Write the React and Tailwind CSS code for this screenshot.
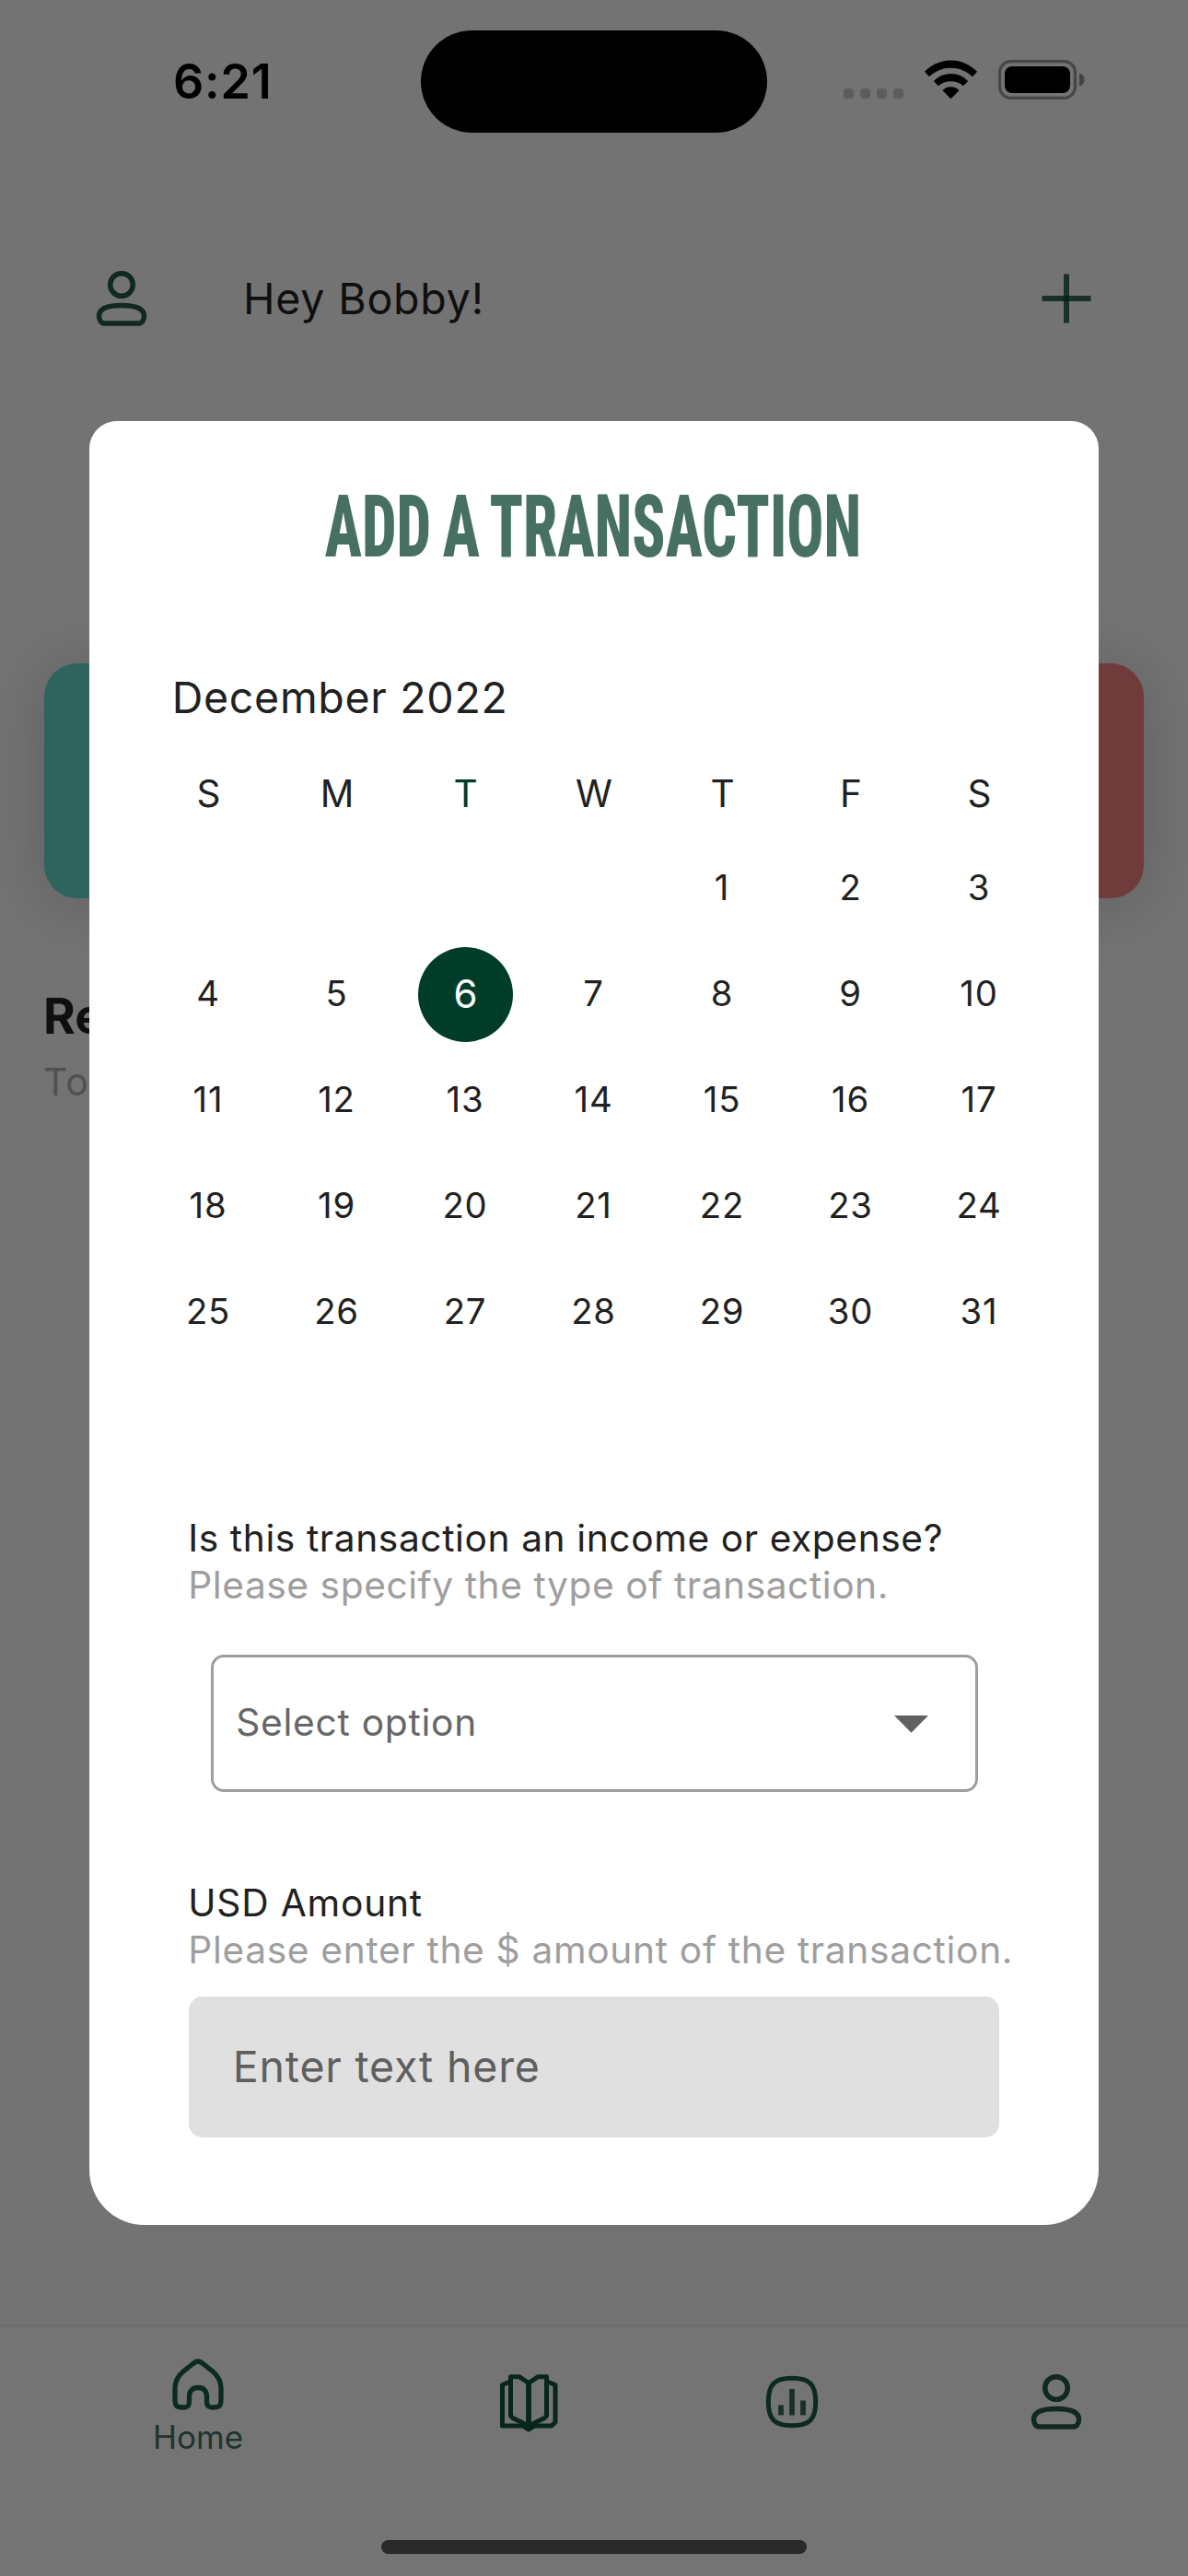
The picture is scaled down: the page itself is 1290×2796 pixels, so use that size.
const weekdays = ["S", "M", "T", "W", "T", "F", "S"];
const firstWeekday = 4;
const selectedDay = 6;
const cells = Array.from({ length: 35 }, (_, i) => (i >= firstWeekday ? i - firstWeekday + 1 : null));

function UserIcon() {
  return (
    <svg width="60" height="66" viewBox="0 0 60 66" fill="none" stroke="#12291f" strokeWidth="5.500">
      <circle cx="30" cy="18" r="12.3" />
      <path d="M12 60H48C52 60 54.5 56.500 54.500 52C54.500 43 44 40.500 30 40.500S5.500 43 5.500 52C5.500 56.500 8 60 12 60Z" />
    </svg>
  );
}

function PlusIcon() {
  return (
    <svg width="60" height="60" viewBox="0 0 60 60" fill="none" stroke="#1a3029" strokeWidth="6">
      <path d="M30 3.500V56.500M3.500 30H56.500" />
      <path d="M27 30H33" stroke="#04231a" />
    </svg>
  );
}

function HomeIcon() {
  return (
    <svg width="60" height="60" viewBox="0 0 60 60" fill="none" stroke="#0b2a20" strokeWidth="5.300" strokeLinejoin="round">
      <path d="M30 5C32 5 33.500 6.200 36 8L46 16C52 21 55 26 55 34V45C55 54 53.500 55 46 55C40.500 55 39.500 53 39.500 47V43C39.500 37 36 33.500 30 33.500S20.500 37 20.500 43V47C20.500 53 19.500 55 14 55C6.500 55 5 54 5 45V34C5 26 8 21 14 16L24 8C26.500 6.200 28 5 30 5Z" />
    </svg>
  );
}

function BookIcon() {
  return (
    <svg width="66" height="66" viewBox="0 0 66 66" fill="none" stroke="#08261c" strokeWidth="5" strokeLinejoin="round">
      <path d="M33 11.500L23 4.800H13.500V47C13.500 50 26 53 33 59C40 53 52.500 50 52.500 47V4.800H43L33 11.500Z" />
      <path d="M33 11V59" strokeWidth="5.800" />
      <path d="M13 10L4.500 13.500V58H27L33 62L39 58H58L62 54V13.500L53 10" />
      <path d="M26 57L33 61L40 57" strokeWidth="6" />
    </svg>
  );
}

function ChartIcon() {
  return (
    <svg width="60" height="60" viewBox="0 0 60 60" fill="none" stroke="#0b2a20" strokeWidth="5">
      <path d="M30 4.300C49 4.300 55.700 11 55.700 30S49 55.700 30 55.700S4.300 49 4.300 30S11 4.300 30 4.300Z" />
      <path d="M18 33.500V44.500M30 16V44.500M42 28.500V44.500" stroke="#1a3029" strokeWidth="5.800" />
    </svg>
  );
}

function StatusBar() {
  return (
    <div className="flex h-[172px] items-start">
      <div className="w-[457px] pt-[59px] pl-[188px] text-[52px] leading-[60px] font-semibold tracking-[0.8px] text-black">6:21</div>
      <div className="mt-[33.4px] h-[110.5px] w-[376px] rounded-full bg-black" />
      <div className="mt-[65px] ml-[83px] flex items-start">
        <div className="mt-[31px] flex gap-[7px]">
          {[0, 1, 2, 3].map((i) => (
            <span key={i} className="size-[11px] rounded-[4px] bg-[#5c5c5c]" />
          ))}
        </div>
        <svg className="ml-[22px]" width="59" height="43" viewBox="0 0 59 43" fill="#000">
          <path d="M1 12.800C9 5 18.500 0.500 29.500 0.500S50 5 58 12.800L53 18.200C46 12 38.500 8.800 29.500 8.800S13 12 6 18.200Z" />
          <path d="M10.800 23C16 17.800 22 15 29.500 15S43 17.800 48.200 23L43 28.300C39 24.800 35 23.200 29.500 23.200S20 24.800 16 28.300Z" />
          <path d="M20.500 33.300C23 30.500 25.500 29.300 29.500 29.300S36 30.500 38.500 33.300L29.500 42.300Z" />
        </svg>
        <svg className="ml-[22px]" width="95" height="43" viewBox="0 0 95 43" fill="none">
          <rect x="1.500" y="1.500" width="82" height="40" rx="12.500" stroke="#474747" strokeWidth="3.400" />
          <rect x="7" y="7" width="71" height="29" rx="8" fill="#000" />
          <path d="M88 14.500C91.500 15.500 93.500 18 93.500 21.500S91.500 27.500 88 28.500Z" fill="#434343" />
        </svg>
      </div>
    </div>
  );
}

function HomeScreen() {
  return (
    <div className="flex h-full flex-col">
      <StatusBar />
      <div className="flex h-[304px] items-center justify-between pr-[102px] pl-[102px]">
        <div className="flex items-center">
          <UserIcon />
          <span className="ml-[102px] text-[46.500px] leading-[60px] tracking-[0.800px] text-[#0f0f0f]">Hey Bobby!</span>
        </div>
        <PlusIcon />
      </div>
      <div className="mt-[244px] flex gap-12 px-12">
        <div className="h-[255px] flex-1 rounded-[36px] bg-[#2e645d] shadow-[0_6px_66px_rgba(0,0,0,0.17)]" />
        <div className="h-[255px] flex-1 rounded-[36px] bg-[#703c3b] shadow-[0_6px_66px_rgba(0,0,0,0.17)]" />
      </div>
      <div className="mt-[98px] flex flex-col pl-[47px]">
        <span className="text-[53px] leading-[60px] font-bold text-[#0f0f0f]">Re</span>
        <span className="mt-[11px] text-[41px] leading-[60px] tracking-[1px] text-[#515151]">To</span>
      </div>
      <nav className="mt-auto flex h-[274px] border-t-[4px] border-[#707070] bg-[#747474]">
        <div className="flex w-[430px] flex-col items-center pt-[32px]">
          <HomeIcon />
          <span className="mt-[2px] text-[35px] leading-[50px] text-[#1e352e]">Home</span>
        </div>
        <div className="flex w-[287px] justify-center pt-[49px]"><BookIcon /></div>
        <div className="flex w-[286px] justify-center pt-[51px]"><ChartIcon /></div>
        <div className="flex w-[287px] justify-center pt-[48px]"><UserIcon /></div>
      </nav>
    </div>
  );
}

function Calendar() {
  return (
    <div className="px-[60px]">
      <div className="mt-[105px] pl-[30px] text-[46.5px] leading-[60px] tracking-[0.7px]">December 2022</div>
      <div className="mt-[50px] grid grid-cols-7 text-center text-[40.5px] leading-[50px]">
        {weekdays.map((d, i) => (
          <span key={i} className={i === 2 ? "text-[#003d29]" : ""}>{d}</span>
        ))}
      </div>
      <div className="mt-[20px] grid auto-rows-[115px] grid-cols-7 text-[38.3px] leading-none tracking-[0.8px]">
        {cells.map((d, i) => (
          <div key={i} className="flex items-center justify-center">
            {d === selectedDay ? (
              <span className="flex size-[103px] items-center justify-center rounded-full bg-[#003d29] pb-[1px] text-[42px] tracking-normal text-white">{d}</span>
            ) : (
              <span className="pr-[1px] pb-[2px]">{d}</span>
            )}
          </div>
        ))}
      </div>
    </div>
  );
}

function TransactionModal() {
  return (
    <div className="flex h-[1958px] w-[1096.5px] flex-col rounded-t-[30px] rounded-b-[60px] bg-white pt-[65px] text-[#212121]">
      <h1 className="flex h-[100px] items-center justify-center">
        <span className="inline-block scale-x-[0.706] pr-[4px] font-['Roboto'] text-[94.5px] leading-[100px] font-extrabold [word-spacing:-4px] whitespace-nowrap text-[#477063] [font-stretch:75%]">ADD A TRANSACTION</span>
      </h1>
      <Calendar />
      <div className="mt-[162px] pl-[107.5px] text-[40.7px] leading-[51px] whitespace-nowrap">
        <p className="tracking-[0.59px]">Is this transaction an income or expense?</p>
        <p className="tracking-[0.56px] text-[#9e9e9e]">Please specify the type of transaction.</p>
      </div>
      <div className="mt-[50px] ml-[132px] flex h-[149px] w-[833px] items-center justify-between rounded-[14px] border-[3px] border-[#9e9e9e] pr-[51px] pl-[24.5px]">
        <span className="pb-[2px] text-[40.7px] leading-[51px] tracking-[0.72px] text-[#666666]">Select option</span>
        <svg className="mt-[2px]" width="37" height="19" viewBox="0 0 37 19" fill="#616161">
          <path d="M0 0H37L18.500 18.700Z" />
        </svg>
      </div>
      <div className="mt-[95px] pl-[107.5px] text-[40.7px] leading-[51px] whitespace-nowrap">
        <p className="tracking-[0.8px]">USD Amount</p>
        <p className="tracking-[0.66px] text-[#9e9e9e]">Please enter the $ amount of the transaction.</p>
      </div>
      <div className="mt-[25px] ml-[108px] flex h-[153px] w-[880px] items-center rounded-[15px] bg-[#e0e0e0] pt-[1px] pl-[48px] text-[46.500px] tracking-[0.82px] text-[#5f5f5f]">
        Enter text here
      </div>
    </div>
  );
}

export default function App() {
  return (
    <div className="relative h-[2796px] w-[1290px] overflow-hidden bg-[#737373] font-['Inter',sans-serif]">
      <HomeScreen />
      <div className="absolute inset-0 flex flex-col items-center justify-between pt-[456.5px] pb-[24px]">
        <TransactionModal />
        <div className="h-[15px] w-[462px] rounded-full bg-[#292929]" />
      </div>
    </div>
  );
}
